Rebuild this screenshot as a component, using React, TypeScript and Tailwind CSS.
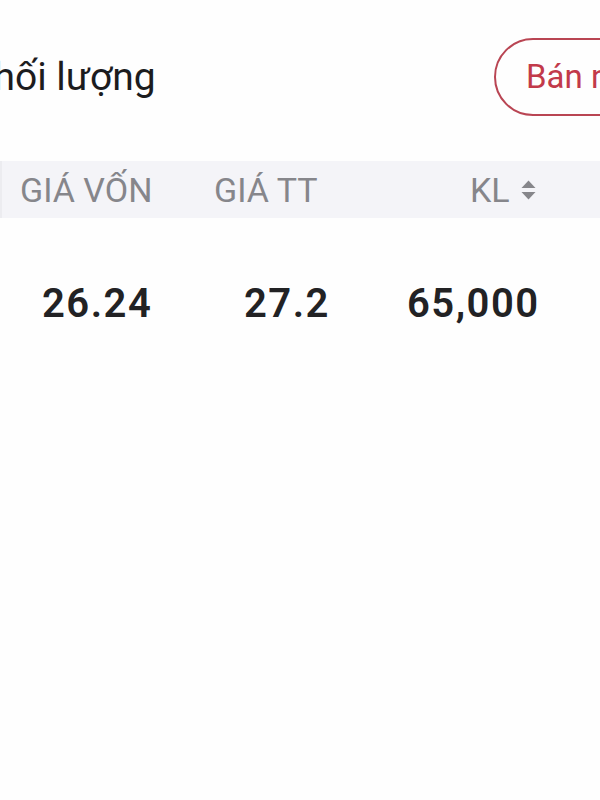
const HEADERS = ['GIÁ VỐN', 'GIÁ TT'];

function SortIcon() {
  return (
    <svg className="w-[17px] h-[22px]" viewBox="0 0 17 22" fill="#86868b">
      <path d="M8.5 1.5 L15.5 9 H1.5 Z" />
      <path d="M8.5 20.5 L15.5 13 H1.5 Z" />
    </svg>
  );
}

export default function App() {
  return (
    <div className="w-[600px] h-[800px] bg-[#fefefe] overflow-hidden font-['Roboto',sans-serif]">
      <div className="flex items-center pt-[38px] h-[116px]">
        <div className="shrink-0 w-[525px] -ml-[31px]">
          <h2 className="text-[39px] leading-none text-[#1c1c1e] whitespace-nowrap">Khối lượng</h2>
        </div>
        <button className="shrink-0 h-[78px] pl-[30px] pr-[32px] rounded-full border-2 border-[#b94553] text-[#c23a4a] text-[33px] whitespace-nowrap">
          Bán nhanh
        </button>
      </div>

      <div className="mt-[45px] h-[57px] bg-[#f4f4f8] border-l-2 border-[#ececf0] flex items-center text-[34px] text-[#86868b] leading-none whitespace-nowrap">
        <div className="w-[212px] pl-[18px]">{HEADERS[0]}</div>
        <div className="w-[256px]">{HEADERS[1]}</div>
        <div className="flex items-center gap-[10px]">
          KL
          <SortIcon />
        </div>
      </div>

      <div className="h-[172px] flex items-center text-[40px] font-semibold tracking-[1.5px] text-[#222224] leading-none whitespace-nowrap">
        <div className="w-[244px] pl-[42px]">26.24</div>
        <div className="w-[163px]">27.2</div>
        <div>65,000</div>
      </div>
    </div>
  );
}
